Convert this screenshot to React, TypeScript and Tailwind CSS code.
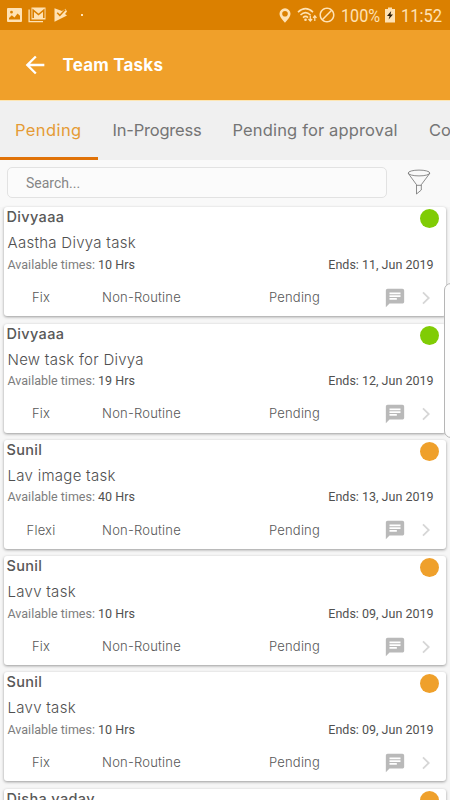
import clsx from "clsx";
import { MdArrowBack, MdBlock, MdChat } from "react-icons/md";

type Task = {
  owner: string;
  title: string;
  hours: string;
  ends: string;
  kind: string;
  level: "green" | "orange";
};

const TASKS: Task[] = [
  { owner: "Divyaaa", title: "Aastha Divya task", hours: "10 Hrs", ends: "11, Jun 2019", kind: "Fix", level: "green" },
  { owner: "Divyaaa", title: "New task for Divya", hours: "19 Hrs", ends: "12, Jun 2019", kind: "Fix", level: "green" },
  { owner: "Sunil", title: "Lav image task", hours: "40 Hrs", ends: "13, Jun 2019", kind: "Flexi", level: "orange" },
  { owner: "Sunil", title: "Lavv task", hours: "10 Hrs", ends: "09, Jun 2019", kind: "Fix", level: "orange" },
  { owner: "Sunil", title: "Lavv task", hours: "10 Hrs", ends: "09, Jun 2019", kind: "Fix", level: "orange" },
  { owner: "Disha yadav", title: "Lavv task", hours: "10 Hrs", ends: "09, Jun 2019", kind: "Fix", level: "orange" },
];

function StatusBar() {
  return (
    <div className="flex h-[30px] shrink-0 items-center bg-[#db8000] text-[#ffe2b4]">
      <svg className="ml-[7px] h-[14px] w-[15px]" viewBox="0 0 15 14">
        <path
          fillRule="evenodd"
          d="M1 0h13a1 1 0 0 1 1 1v12a1 1 0 0 1-1 1H1a1 1 0 0 1-1-1V1a1 1 0 0 1 1-1zM2 11.500h11V7.800L10.500 5.500 7.500 9.500 4.800 7.300 2 10zM4.500 2.800a1.400 1.400 0 1 0 0 2.800 1.400 1.400 0 0 0 0-2.800z"
          fill="currentColor"
        />
      </svg>
      <svg className="ml-[6px] h-4 w-[18px]" viewBox="0 0 18 16" fill="none" stroke="currentColor">
        <path d="M1.1 2.5v12.1H15" strokeWidth="1.3" />
        <path d="M3.5 0.5h14v12h-14z" fill="currentColor" stroke="none" />
        <path d="M5.2 11V3.2l5.3 4.3 5.3-4.3V11" stroke="#db8000" strokeWidth="1.6" />
      </svg>
      <svg className="ml-2 h-[14px] w-[14px]" viewBox="0 0 14 14">
        <path d="M0.5 0.300 8 3 11.500 0.800 13 3.500 11 6 13 7.600 0.500 13.700z" fill="currentColor" />
        <path d="M3.2 4.8 5.800 7.400 11.300 1.6" fill="none" stroke="#db8000" strokeWidth="1.5" />
      </svg>
      <span className="ml-[13px] size-[2px] bg-current" />

      <svg className="ml-auto h-[15px] w-3" viewBox="0 0 12 15">
        <path
          fillRule="evenodd"
          d="M6 0.300a5.500 5.500 0 0 0-5.500 5.500C0.500 9.500 6 14.700 6 14.700s5.500-5.200 5.500-8.900A5.500 5.500 0 0 0 6 0.300zM6 3a2.800 2.800 0 1 1 0 5.600 2.800 2.800 0 0 1 0-5.600z"
          fill="currentColor"
        />
      </svg>
      <svg className="ml-[6px] h-4 w-5" viewBox="0 0 20 16" fill="none" stroke="currentColor" strokeWidth="1.6">
        <path d="M1 5.2Q8.500-1.800 16 5.200M3.500 8Q8.500 3.300 13.500 8M6 10.600Q8.500 8.300 11 10.600" />
        <circle cx="8.500" cy="12.700" r="1.300" fill="currentColor" stroke="none" />
        <path d="M13.300 8.500v5.500M11.500 12l1.800 2 1.800-2M17.800 14V9M16.100 10.800l1.700-2 1.700 2" strokeWidth="1.200" />
      </svg>
      <MdBlock className="ml-px size-[18px]" />
      <span className="ml-[5px] w-[39px] font-[Roboto] text-[19px] leading-none">
        <span className="inline-block origin-left scale-x-[0.85]">100%</span>
      </span>
      <svg className="ml-[5px] h-4 w-[10px]" viewBox="0 0 10 16">
        <path d="M3 0.500h4v1.500h3v13.500H0V2h3z" fill="currentColor" />
        <path d="M6.200 4 2 9h2.600L3.600 12.500 8 7.500H5.500z" fill="#2c1c08" />
      </svg>
      <span className="ml-[6px] w-[49px] font-[Roboto] text-[19px] leading-none">
        <span className="inline-block origin-left scale-x-[0.87]">11:52</span>
      </span>
    </div>
  );
}

function Tabs() {
  return (
    <div className="flex h-[60px] shrink-0 overflow-hidden border-t border-[#fde6b4] bg-[#f0f0f0] text-[16.5px] font-[430] whitespace-nowrap text-[#757575]">
      <div className="flex w-[98px] shrink-0 items-center border-b-[3px] border-[#e07208] pt-[2px] pl-[15px] text-[#e59b35]">
        <span className="tracking-[0.4px]">Pending</span>
      </div>
      <div className="flex w-[120px] shrink-0 items-center pb-px pl-[14.5px] tracking-[-0.2px]">In-Progress</div>
      <div className="flex w-[197px] shrink-0 items-center pb-px pl-[14.5px] tracking-[0.15px]">Pending for approval</div>
      <div className="flex shrink-0 items-center pb-px pl-[14px]">Completed</div>
    </div>
  );
}

function FilterIcon() {
  return (
    <svg className="ml-5 h-[26px] w-6" viewBox="0 0 24 26" fill="none" stroke="#707070" strokeWidth="0.8">
      <ellipse cx="12" cy="4" rx="10.800" ry="2.900" />
      <path d="M1.200 4.300 9.500 15.700V25l4.800-4V15.700L22.800 4.300M9.500 16.300h4.800" />
    </svg>
  );
}

function TaskCard({ task }: { task: Task }) {
  return (
    <div className="relative h-[109px] shrink-0 rounded-[3px] bg-white shadow-[0_1px_3px_rgba(0,0,0,0.38)]">
      <span
        className={clsx(
          "absolute top-[2px] right-[7px] size-[19px] rounded-full",
          task.level === "green" ? "bg-[#80cc05]" : "bg-[#efa02b]",
        )}
      />
      <div className="pl-[2.5px] text-[14.5px] leading-[20px] font-[550] tracking-[0.35px] text-[#585858]">{task.owner}</div>
      <div className="mt-[6px] pl-[3.5px] text-[15px] leading-5 font-[350] tracking-[0.28px] text-[#505050]">{task.title}</div>
      <div className="mt-[3.5px] flex justify-between pr-[12.5px] pl-[3.5px] font-[Roboto] text-[12.5px] leading-4 text-[#505050]">
        <span>
          <span className="text-[#7d7d7d]">Available times:</span> {task.hours}
        </span>
        <span>Ends: {task.ends}</span>
      </div>
      <div className="mt-[15px] flex h-5 items-center text-[13px] font-[350] tracking-[0.2px] text-[#585858]">
        <span className="w-[74px] text-center">{task.kind}</span>
        <span className="w-[127px] text-center">Non-Routine</span>
        <span className="w-[179px] text-center">Pending</span>
        <MdChat className="size-[22px] shrink-0 text-[#b9b9b9]" />
        <svg className="ml-4 h-[14px] w-2 shrink-0" viewBox="0 0 8 14" fill="none" stroke="#d6d6d6" strokeWidth="1.800">
          <path d="M1 1.300 6.800 7 1 12.700" />
        </svg>
      </div>
    </div>
  );
}

export default function App() {
  return (
    <div className="relative flex h-[800px] w-[450px] flex-col overflow-hidden bg-[#f9f9f9] font-[Inter,sans-serif]">
      <StatusBar />
      <header className="flex h-[70px] shrink-0 items-center bg-[#f0a02a] text-white">
        <MdArrowBack className="ml-[21px] size-7" />
        <h1 className="ml-[13.5px] pt-px text-[17px] font-bold tracking-[0.2px]">Team Tasks</h1>
      </header>
      <Tabs />
      <div className="flex h-[47.4px] shrink-0 items-center pb-[3px] pl-[7px]">
        <div className="flex h-[31px] w-[380px] items-center rounded-[5px] border border-[#e2e2e2] bg-[#fbfbfb] pt-px pl-[18px] font-[Roboto] text-sm text-[#868686]">
          Search...
        </div>
        <FilterIcon />
      </div>
      <div className="flex flex-col gap-[7.25px] bg-[#f6f6f6] pr-1 pl-1">
        {TASKS.map((task, i) => (
          <TaskCard key={i} task={task} />
        ))}
      </div>
      {/* edge panel handle, runs off the right side */}
      <div className="absolute top-[283px] -right-[6px] h-[155px] w-3 rounded-l-[7px] border border-[#b5b5b5] bg-[#fcfcfc]" />
    </div>
  );
}
